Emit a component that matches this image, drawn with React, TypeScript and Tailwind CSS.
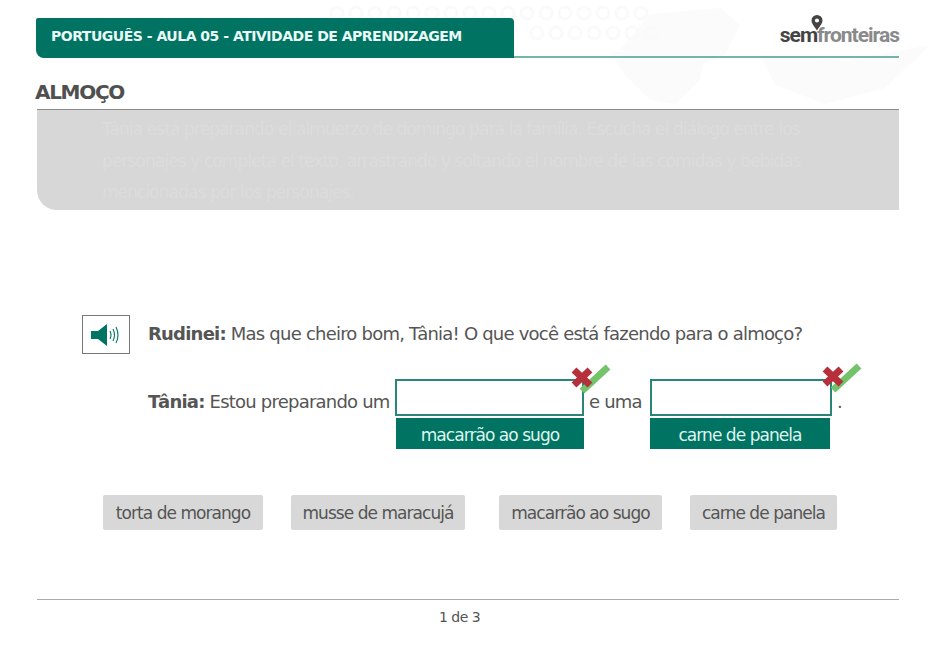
const font = "font-['DejaVu_Sans',sans-serif]";

const topPins = Array.from({ length: 17 }, (_, i) => 2 + i * 19);
const lowPins = Array.from({ length: 7 }, (_, i) => 207 + i * 19);

function Marks({ position }: { position: string }) {
  return (
    <svg className={`absolute ${position} h-[34px] w-[42px]`} viewBox="0 0 42 34">
      <path d="M11 28 L37 4" stroke="#74c26a" strokeWidth="7" fill="none" />
      <path d="M3 7 L19 22 M19 7 L3 22" stroke="#b5303a" strokeWidth="7" fill="none" />
    </svg>
  );
}

function Blank({ width, answer, answerClass, marks }: { width: string; answer: string; answerClass: string; marks: string }) {
  return (
    <span className={`relative inline-block h-[37px] ${width} shrink-0 border-2 border-[#2a8579] bg-white`}>
      <Marks position={marks} />
      <span className={`absolute top-[37px] h-[31px] ${answerClass} flex items-center justify-center bg-[#007362] pt-[4px] text-[17px] tracking-[-0.95px] text-[#dff3ee]`}>
        {answer}
      </span>
    </span>
  );
}

function Chip({ label, width, ml }: { label: string; width: string; ml: string }) {
  return (
    <div className={`flex h-[35px] ${width} ${ml} items-center justify-center rounded-[2px] bg-[#d8d8d8] pt-[2px] text-[17px] tracking-[-0.95px] text-[#555]`}>
      {label}
    </div>
  );
}

export default function App() {
  return (
    <div className={`relative h-[656px] w-[940px] overflow-hidden bg-white ${font}`}>
      <svg className="absolute left-[330px] top-0 h-[110px] w-[610px]" viewBox="0 0 610 110">
        <g fill="#fbfbfb">
          <path d="M320 14 L390 8 L410 25 L395 55 L360 68 L320 55 L290 50 Z" />
          <path d="M280 52 L375 50 L370 80 L345 104 L320 100 L295 75 Z" />
          <path d="M430 55 L520 60 L600 45 L555 88 L495 104 L445 85 Z" />
        </g>
        <g fill="none" stroke="#fafafa" strokeWidth="3">
          {topPins.map((x) => (
            <circle key={x} cx={x + 5} cy={13} r={6} />
          ))}
          {lowPins.map((x) => (
            <circle key={x} cx={x} cy={33} r={6} />
          ))}
        </g>
      </svg>
      <div className="relative flex flex-col pl-[36px] pr-[41px] pt-[18px]">
        <div className="flex items-end">
          <div className="flex h-[40px] w-[478px] items-center rounded-tr-[4px] rounded-bl-[8px] rounded-tl-[2px] bg-[#007362] pb-[3px] pl-[15px] text-[14px] font-bold tracking-[-0.49px] text-[#eafaf6]">
            PORTUGUÊS - AULA 05 - ATIVIDADE DE APRENDIZAGEM
          </div>
          <div className="flex h-[40px] flex-1 flex-col items-end justify-end border-b-2 border-[#74b5a9] pb-[11px]">
            <div className="relative font-['Roboto',sans-serif] text-[21px] font-bold leading-[20px] tracking-[-1px]">
              <svg className="absolute -top-[10px] left-[31px] h-[16px] w-[12px]" viewBox="0 0 12 16">
                <path fillRule="evenodd" d="M6 0a5.5 5.5 0 0 1 5.5 5.5C11.5 9 8 12 6 15.5 4 12 .5 9 .5 5.5A5.5 5.5 0 0 1 6 0Zm0 3.4a2.1 2.1 0 1 0 0 4.2 2.1 2.1 0 0 0 0-4.2Z" fill="#444" />
              </svg>
              <span className="text-[#444]">sem</span>
              <span className="text-[#8a8a8a]">fronteiras</span>
            </div>
          </div>
        </div>
        <h1 className="-ml-[1px] mt-[20px] text-[20px] font-bold leading-[28px] tracking-[-1.3px] text-[#505050]">ALMOÇO</h1>
        <div className="ml-px mt-[3px] h-[101px] rounded-bl-[20px] border-t border-[#8c8c8c] bg-[#d7d7d7] pl-[65px] pt-[4px] text-[17px] leading-[31.5px] tracking-[-0.9px] whitespace-nowrap text-[#dcdcdc]">
          Tânia está preparando el almuerzo de domingo para la família. Escucha el diálogo entre los
          <br />
          personajes y completa el texto, arrastrando y soltando el nombre de las comidas y bebidas
          <br />
          mencionadas por los personajes.
        </div>

        <div className="mt-[105px] flex items-center pl-[46px] text-[#555]">
          <button className="flex h-[39px] w-[48px] items-center justify-center border border-[#777] bg-white">
            <svg className="h-[22px] w-[30px]" viewBox="0 0 30 22">
              <path d="M0 7h7l9-7v22l-9-7H0Z" fill="#007362" />
              <path d="M19 7q2 4 0 8M22 5q3 6 0 12M25 3q4 8 0 16" stroke="#007362" strokeWidth="1.1" fill="none" />
            </svg>
          </button>
          <p className="-mt-[3px] ml-[18px] text-[18px] tracking-[-0.78px]">
            <b>Rudinei:</b> Mas que cheiro bom, Tânia! O que você está fazendo para o almoço?
          </p>
        </div>

        <div className="mt-[25px] flex h-[37px] items-center pl-[112px] text-[18px] tracking-[-0.78px] text-[#555]">
          <span className="w-[247px] shrink-0 pt-[8px]">
            <b>Tânia:</b> Estou preparando um
          </span>
          <Blank width="w-[189px]" answer="macarrão ao sugo" answerClass="-left-[1px] w-[188px]" marks="-top-[18px] -right-[31px]" />
          <span className="ml-[5px] w-[61px] shrink-0 pt-[8px]">e uma</span>
          <Blank width="w-[182px]" answer="carne de panela" answerClass="-left-[2px] w-[180px]" marks="-top-[19px] -right-[34px]" />
          <span className="ml-[5px] pt-[8px]">.</span>
        </div>

        <div className="mt-[79px] flex pl-[67px]">
          <Chip label="torta de morango" width="w-[160px]" ml="" />
          <Chip label="musse de maracujá" width="w-[174px]" ml="ml-[28px]" />
          <Chip label="macarrão ao sugo" width="w-[163px]" ml="ml-[34px]" />
          <Chip label="carne de panela" width="w-[147px]" ml="ml-[28px]" />
        </div>

        <div className="ml-px mt-[69px] border-t border-[#aaa] pt-[8px] text-center text-[14px] leading-[18px] tracking-[-0.5px] text-[#555]">
          <span className="-ml-[17px] inline-block">1 de 3</span>
        </div>
      </div>
    </div>
  );
}
